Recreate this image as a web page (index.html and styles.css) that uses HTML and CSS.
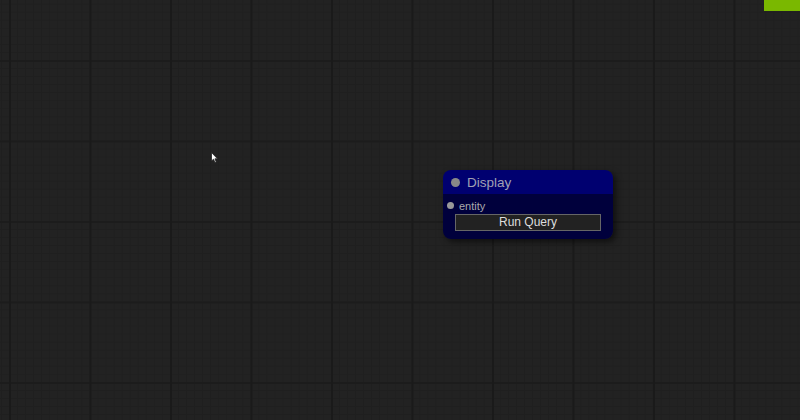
FILE: index.html
```html
<!DOCTYPE html>
<html>
<head>
<meta charset="utf-8">
<link rel="stylesheet" href="styles.css">
</head>
<body>
<div class="canvas">
  <div class="fps"></div>
  <svg class="cursor" width="8" height="12" viewBox="0 0 8 12"><path d="M0.5 0.5 L0.5 9 L2.5 7.2 L4 10.5 L5.3 10 L3.9 6.8 L6.5 6.8 Z" fill="#fff" stroke="#222" stroke-width="0.8"/></svg>
  <div class="node">
    <div class="node-title">
      <span class="title-dot"></span>
      <span class="title-text">Display</span>
    </div>
    <div class="node-body">
      <div class="slot">
        <span class="slot-dot"></span>
        <span class="slot-label">entity</span>
      </div>
      <div class="widget">Run Query</div>
    </div>
  </div>
</div>
</body>
</html>
```
FILE: styles.css
```css
html, body {
  margin: 0;
  padding: 0;
  width: 800px;
  height: 420px;
  overflow: hidden;
}
.canvas {
  position: relative;
  width: 800px;
  height: 420px;
  background-color: #222222;
  background-image:
    linear-gradient(to right, #1a1a1a 0, #1a1a1a 2px, transparent 2px),
    linear-gradient(to bottom, #1c1c1c 0, #1c1c1c 2px, transparent 2px),
    linear-gradient(to right, #1f1f1f 0, #1f1f1f 1px, transparent 1px),
    linear-gradient(to bottom, #1f1f1f 0, #1f1f1f 1px, transparent 1px);
  background-size: 80.5px 80.5px, 80.5px 80.5px, 8.05px 8.05px, 8.05px 8.05px;
  background-position: 9px 0, 0 60px, 9px 0, 0 60px;
  font-family: Arial, "Liberation Sans", sans-serif;
}
.fps {
  position: absolute;
  right: 0;
  top: 0;
  width: 36px;
  height: 11px;
  background: #7ab800;
}
.cursor {
  position: absolute;
  left: 211px;
  top: 152px;
}
.node {
  position: absolute;
  left: 443px;
  top: 170px;
  width: 170px;
  border-radius: 8px;
  overflow: hidden;
  box-shadow: 3px 3px 6px rgba(0, 0, 0, 0.55);
}
.node-title {
  height: 24px;
  background: #000070;
  display: flex;
  align-items: center;
  padding-left: 8px;
}
.title-dot {
  width: 9px;
  height: 9px;
  border-radius: 50%;
  background: #888;
}
.title-text {
  margin-left: 7px;
  color: #a0a0b4;
  font-size: 13.5px;
}
.node-body {
  background: #00003c;
  padding: 5px 12px 8px 12px;
}
.slot {
  display: flex;
  align-items: center;
  height: 13px;
  margin-left: -8px;
}
.slot-dot {
  width: 7px;
  height: 7px;
  border-radius: 50%;
  background: #999;
}
.slot-label {
  margin-left: 5px;
  color: #aaa;
  font-size: 11px;
}
.widget {
  margin-top: 2px;
  height: 15px;
  line-height: 15px;
  background: #222;
  border: 1px solid #666;
  color: #ddd;
  font-size: 12px;
  text-align: center;
}
```
